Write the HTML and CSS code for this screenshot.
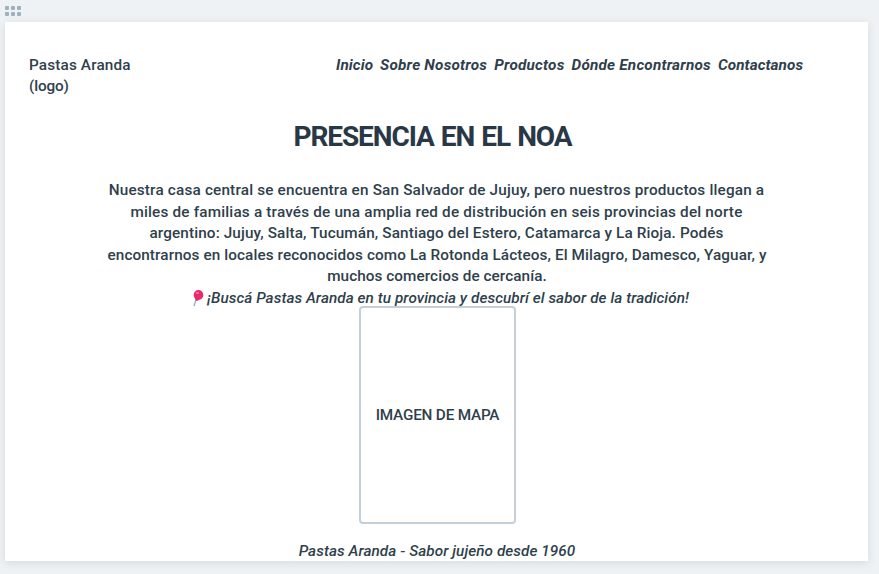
FILE: index.html
```
<!DOCTYPE html>
<html lang="es">
<head>
<meta charset="utf-8">
<title>Pastas Aranda</title>
<link rel="stylesheet" href="styles.css">
</head>
<body>
<div class="handle"><i></i><i></i><i></i><i></i><i></i><i></i></div>
<main class="card">
  <header class="top">
    <div class="logo"><span>Pastas Aranda</span><br><span class="sub">(logo)</span></div>
    <nav class="nav"><a class="short">Inicio</a><a>Sobre Nosotros</a><a>Productos</a><a>Dónde Encontrarnos</a><a class="short">Contactanos</a></nav>
  </header>
  <h1 class="title">PRESENCIA EN EL NOA</h1>
  <section class="copy">
    <p class="l1">Nuestra casa central se encuentra en San Salvador de Jujuy, pero nuestros productos llegan a</p>
    <p class="l2">miles de familias a través de una amplia red de distribución en seis provincias del norte</p>
    <p class="l3">argentino: Jujuy, Salta, Tucumán, Santiago del Estero, Catamarca y La Rioja. Podés</p>
    <p class="l4">encontrarnos en locales reconocidos como La Rotonda Lácteos, El Milagro, Damesco, Yaguar, y</p>
    <p class="l5">muchos comercios de cercanía.</p>
    <p class="l6"><svg class="pin" viewBox="0 0 16 18"><path d="M7.500 9 5 17" stroke="#99a9b5" stroke-width="1.300"/><ellipse cx="9.500" cy="6" rx="4.800" ry="5" fill="#ed2868"/><path d="M6 9.500l4 1.500-2.500 1z" fill="#c91f58"/><ellipse cx="8.500" cy="4" rx="1.500" ry="1" fill="#ff82aa"/></svg>¡Buscá Pastas Aranda en tu provincia y descubrí el sabor de la tradición!</p>
  </section>
  <div class="map">IMAGEN DE MAPA</div>
  <footer class="foot">Pastas Aranda - Sabor jujeño desde 1960</footer>
</main>
</body>
</html>
```
FILE: styles.css
```
* { box-sizing: border-box; }
body { margin: 0; height: 574px; overflow: hidden; background: #eef2f5; color: #2f3f4c; font: 500 15.3px/21.5px Roboto, sans-serif; }
.handle { display: grid; grid-template-columns: repeat(3, 4px); gap: 2px; padding: 6px 5px 0; height: 22px; align-content: start; }
.handle i { height: 4px; border-radius: 1px; background: #9fb1bf; }
.card { width: 863px; height: 539px; margin-left: 5px; padding: 33px 24px 0; background: #fff; box-shadow: 0 2px 8px rgba(41,56,69,.12); }
.top { display: flex; height: 66px; }
.logo { width: 307px; letter-spacing: .15px; line-height: 21px; }
.sub { letter-spacing: -.15px; }
.nav { display: flex; gap: 7px; font-weight: 700; font-style: italic; letter-spacing: .22px; white-space: nowrap; }
.nav .short { letter-spacing: .08px; }
.title { margin: 0; padding-right: 8px; color: #283846; font-size: 28px; line-height: 32px; letter-spacing: -1.1px; word-spacing: 1.3px; text-align: center; }
.copy { padding-top: 27px; text-align: center; white-space: nowrap; }
.copy p { margin: 0; height: 21.5px; }
.l1, .l2 { letter-spacing: .18px; }
.l3 { letter-spacing: .125px; }
.l4 { padding-left: 1px; letter-spacing: .1px; }
.l5 { padding-left: 1px; letter-spacing: .07px; }
.copy .l6 { padding-left: 5px; letter-spacing: .06px; }
.l6, .foot { font-style: italic; }
.pin { width: 16px; height: 18px; margin-right: 2px; vertical-align: -4px; }
.map { width: 157px; height: 218px; margin: -3px 0 0 330px; padding-top: 2px; border: 2px solid #c3d0da; border-radius: 4px; display: flex; align-items: center; justify-content: center; letter-spacing: -.2px; white-space: nowrap; }
.foot { padding: 17px 0 0 1px; text-align: center; letter-spacing: .07px; }
```
